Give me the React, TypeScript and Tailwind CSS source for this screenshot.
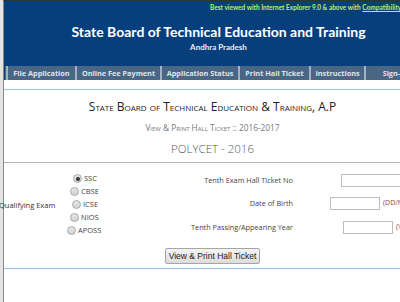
import React from "react";

const navItems = [
  { label: "File Application", w: "w-[69px]" },
  { label: "Online Fee Payment", w: "w-[85px]" },
  { label: "Application Status", w: "w-[78px]" },
  { label: "Print Hall Ticket", w: "w-[71px]" },
  { label: "Instructions", w: "w-[55px]" },
  { label: "Sign-In", w: "w-[60px]" },
];

function Radio({ label, checked, offset }: { label: string; checked?: boolean; offset: string }) {
  return (
    <div className={`flex items-center h-[13px] ${offset}`}>
      <span className="w-[9px] h-[9px] shrink-0 rounded-full border border-[#a9a9a9] bg-gradient-to-b from-[#e6e6e6] to-[#d2d2d2] flex items-center justify-center">
        {checked ? <span className="w-[4px] h-[4px] rounded-full bg-[#333]" /> : null}
      </span>
      <span className="ml-[2px] text-[7.5px] text-[#444] whitespace-nowrap">{label}</span>
    </div>
  );
}

export default function App() {
  return (
    <div className="w-[400px] h-[302px] overflow-hidden bg-white flex" style={{ fontFamily: "'Open Sans', sans-serif" }}>
      <div className="w-[3px] shrink-0 bg-[#e4e4e4]" />
      <div className="w-[430px] shrink-0 border-l border-[#8a8a8a] border-t border-t-[#333] flex flex-col">
        {/* Header */}
        <div className="h-[65px] bg-[#073f7d] flex flex-col" style={{ fontFamily: "Lato, sans-serif" }}>
          <div className="ml-[206px] mt-[3px] text-[6.5px] font-bold text-[#b9ef6c] whitespace-nowrap leading-[8px]">
            Best viewed with Internet Explorer 9.0 &amp; above with <span className="underline">Compatibility View</span>
          </div>
          <div className="mt-[11px] text-center text-white font-bold text-[14px] leading-[17px]">
            State Board of Technical Education and Training
          </div>
          <div className="mt-[2px] text-center text-[#e9ecf4] font-bold text-[8px] leading-[10px]">Andhra Pradesh</div>
        </div>
        {/* Nav */}
        <div className="h-[14px] bg-[#073f7d] flex items-stretch pl-[1px]">
          <div className="w-[3px] bg-[#4a6685] border-r-2 border-[#9fb2c6]" />
          {navItems.map((n) => (
            <div
              key={n.label}
              className={`${n.w} shrink-0 bg-[#4a6685] border-r-2 border-[#9fb2c6] flex items-center justify-center text-[7.3px] font-bold text-[#dde4ec] whitespace-nowrap`}
            >
              {n.label}
            </div>
          ))}
        </div>
        <div className="h-[9px] bg-white" />
        <div className="h-[1px] bg-[#9cc4ec]" />
        {/* Content */}
        <div className="pr-[12px] flex flex-col items-center">
          <div className="mt-[9px] text-[12px] text-[#222] [font-variant:small-caps] leading-[15px]">
            State Board of Technical Education &amp; Training, A.P
          </div>
          <div className="mt-[9px] text-[8.3px] text-[#777] [font-variant:small-caps] leading-[10px]">
            View &amp; Print Hall Ticket :: 2016-2017
          </div>
          <div className="mt-[8px] text-[11.5px] text-[#555] leading-[16px] font-light">POLYCET - 2016</div>
        </div>
        <div className="mt-[5px] h-[1px] bg-[#b5b5b5]" />
        {/* Form */}
        <div className="flex h-[79px]">
          <div className="w-[69px] shrink-0 -ml-[5px] pt-[6px] flex items-center text-[7.5px] text-[#333] whitespace-nowrap">
            Qualifying Exam
          </div>
          <div className="w-[40px] shrink-0 flex flex-col pt-[9px]">
            <Radio label="SSC" checked offset="ml-[5px]" />
            <Radio label="CBSE" offset="ml-[2px]" />
            <Radio label="ICSE" offset="ml-[4px]" />
            <Radio label="NIOS" offset="ml-[2px]" />
            <Radio label="APOSS" offset="ml-[-1px]" />
          </div>
          <div className="w-[185px] shrink-0 flex flex-col items-end pt-[11px] text-[7.3px] text-[#444]">
            <div className="h-[13px] flex items-center whitespace-nowrap">Tenth Exam Hall Ticket No</div>
            <div className="h-[13px] mt-[10px] flex items-center whitespace-nowrap">Date of Birth</div>
            <div className="h-[13px] mt-[11px] flex items-center whitespace-nowrap">Tenth Passing/Appearing Year</div>
          </div>
          <div className="flex flex-col pt-[11px] text-[7px] text-[#a0403a]">
            <div className="h-[13px] flex items-center">
              <div className="ml-[48px] w-[70px] h-[13px] border border-[#bdbdbd] bg-white" />
            </div>
            <div className="h-[13px] mt-[10px] flex items-center">
              <div className="ml-[37px] w-[50px] h-[13px] border border-[#bdbdbd] bg-white" />
              <span className="ml-[3px] whitespace-nowrap">(DD/MM/YYYY)</span>
            </div>
            <div className="h-[13px] mt-[11px] flex items-center">
              <div className="ml-[50px] w-[50px] h-[13px] border border-[#bdbdbd] bg-white" />
              <span className="ml-[3px] whitespace-nowrap">(YYYY)</span>
            </div>
          </div>
        </div>
        <div className="pr-[12px] flex justify-center">
          <button
            className="mt-[6px] h-[16px] px-[3px] border border-[#a5a5a5] rounded-[2px] bg-gradient-to-b from-[#f4f4f4] to-[#dcdcdc] text-[8.5px] text-[#222] leading-[14px]"
            style={{ fontFamily: "'Liberation Sans', Arial, sans-serif" }}
          >
            View &amp; Print Hall Ticket
          </button>
        </div>
        <div className="mt-[4px] h-[1px] bg-[#9cc4ec]" />
      </div>
    </div>
  );
}
